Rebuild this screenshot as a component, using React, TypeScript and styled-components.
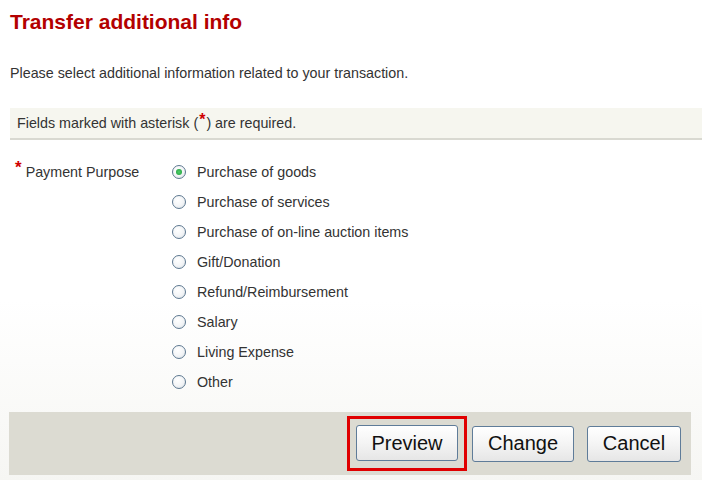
import React from "react";
import styled, { createGlobalStyle } from "styled-components";

const Global = createGlobalStyle`
  html, body { margin: 0; padding: 0; background: #ffffff; }
  body { font-family: "Liberation Sans", Arial, sans-serif; color: #333; }
`;

const Page = styled.div`
  width: 702px;
  height: 480px;
  box-sizing: border-box;
  padding: 9px 0 0 10px;
  background: linear-gradient(to bottom, #ffffff 0px, #ffffff 300px, #f6f6f3 480px);
  overflow: hidden;
  display: flex;
  flex-direction: column;
`;

const Title = styled.h1`
  margin: 0;
  font-size: 21px;
  line-height: 26px;
  font-weight: bold;
  color: #b30000;
`;

const Intro = styled.p`
  margin: 29px 0 0 0;
  font-size: 14.3px;
  line-height: 18px;
  color: #333;
`;

const Notice = styled.div`
  margin-top: 26px;
  height: 32px;
  box-sizing: border-box;
  padding: 0 0 0 7px;
  display: flex;
  align-items: center;
  background: #f6f6ef;
  border-bottom: 2px solid #d9d9d1;
  font-size: 14.3px;
  color: #333;
`;

const Star = styled.span`
  color: #d00000;
  font-size: 16px;
  font-weight: bold;
  position: relative;
  top: -3px;
  margin: 0 1px;
`;

const FormRow = styled.div`
  display: grid;
  grid-template-columns: 162px 1fr;
  margin-top: 17px;
`;

const Label = styled.div`
  height: 30px;
  display: flex;
  align-items: center;
  padding-left: 5px;
  font-size: 14.3px;
  color: #333;
`;

const LabelStar = styled.span`
  color: #d00000;
  font-size: 17px;
  font-weight: bold;
  position: relative;
  top: -4px;
  margin-right: 4px;
`;

const RadioList = styled.div`
  display: flex;
  flex-direction: column;
`;

const Option = styled.label`
  height: 30px;
  display: flex;
  align-items: center;
  gap: 11px;
  font-size: 14.3px;
  color: #333;
`;

const RadioDot = styled.span<{ $checked?: boolean }>`
  width: 14px;
  height: 14px;
  box-sizing: border-box;
  border-radius: 50%;
  border: 1px solid #5d7890;
  background: radial-gradient(circle at 40% 35%, #ffffff 0%, #f2f4f6 55%, #d5dbe2 100%);
  display: flex;
  align-items: center;
  justify-content: center;
  &::after {
    content: "";
    width: 6px;
    height: 6px;
    border-radius: 50%;
    background: ${(p) => (p.$checked ? "radial-gradient(circle, #4fd06a 0%, #1e9a3a 100%)" : "transparent")};
  }
`;

const Footer = styled.div`
  margin-top: 15px;
  margin-left: -1px;
  width: 682px;
  height: 63px;
  box-sizing: border-box;
  background: #dcdbd2;
  display: flex;
  align-items: center;
  justify-content: flex-end;
  padding-right: 10px;
`;

const Highlight = styled.div`
  border: 3px solid #e00000;
  padding: 6px 6px 7px 6px;
  display: flex;
  margin-right: 5px;
`;

const Button = styled.button<{ $w: number }>`
  width: ${(p) => p.$w}px;
  height: 36px;
  box-sizing: border-box;
  border: 1px solid #5f7c99;
  border-radius: 3px;
  background: linear-gradient(to bottom, #ffffff 0%, #f4f4f4 50%, #e6e6e6 100%);
  font-family: "Liberation Sans", Arial, sans-serif;
  font-size: 20px;
  color: #111;
  padding: 0;
  display: flex;
  align-items: center;
  justify-content: center;
`;

const Spacer = styled.div<{ $w: number }>`
  width: ${(p) => p.$w}px;
`;

const options = [
  "Purchase of goods",
  "Purchase of services",
  "Purchase of on-line auction items",
  "Gift/Donation",
  "Refund/Reimbursement",
  "Salary",
  "Living Expense",
  "Other",
];

export default function App() {
  return (
    <>
      <Global />
      <Page>
        <Title>Transfer additional info</Title>
        <Intro>Please select additional information related to your transaction.</Intro>
        <Notice>
          Fields marked with asterisk (<Star>*</Star>) are required.
        </Notice>
        <FormRow>
          <Label>
            <LabelStar>*</LabelStar>Payment Purpose
          </Label>
          <RadioList>
            {options.map((o, i) => (
              <Option key={o}>
                <RadioDot $checked={i === 0} />
                {o}
              </Option>
            ))}
          </RadioList>
        </FormRow>
        <Footer>
          <Highlight>
            <Button $w={102}>Preview</Button>
          </Highlight>
          <Button $w={102}>Change</Button>
          <Spacer $w={13} />
          <Button $w={94}>Cancel</Button>
        </Footer>
      </Page>
    </>
  );
}
